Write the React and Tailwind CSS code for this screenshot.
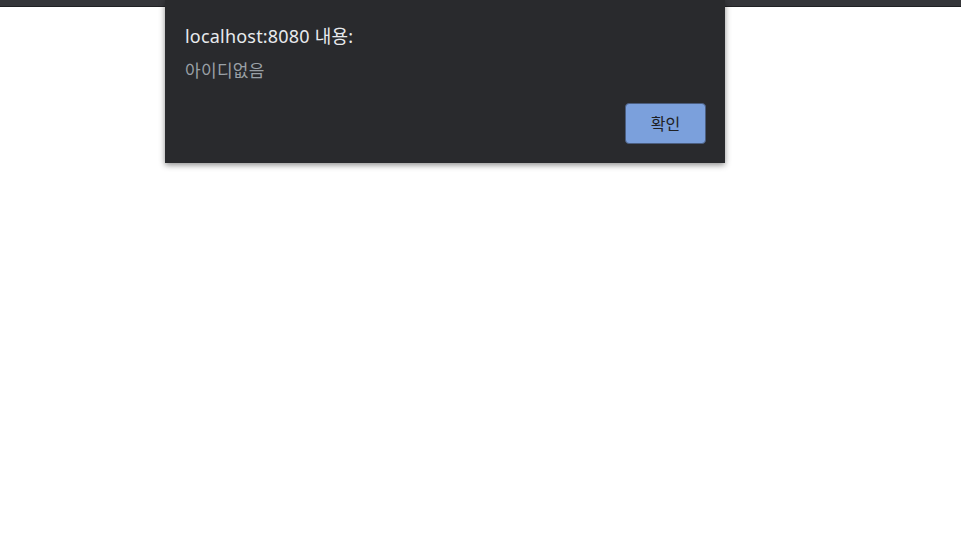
export default function App() {
  return (
    <div className="relative h-[535px] w-[961px] overflow-hidden bg-white font-['Noto_Sans','Noto_Sans_CJK_KR',sans-serif]">
      <div className="h-[7px] w-full border-b border-[#202124] bg-[#35363a]" />
      <div className="absolute left-[165px] top-0 h-[163px] w-[560px] bg-[#292a2d] shadow-[0_2px_6px_rgba(0,0,0,0.45)]">
        <div className="px-5 pt-[23px]">
          <div className="text-[18px] leading-[26px] tracking-[0.2px] text-[#e8eaed]">localhost:8080 내용:</div>
          <div className="mt-[10px] text-[17px] leading-[24px] tracking-[0.3px] text-[#9aa0a6]">아이디없음</div>
        </div>
        <div className="absolute right-[19px] top-[103px]">
          <button className="flex h-[41px] w-[81px] items-center justify-center rounded-[4px] border border-[#4b5e80] bg-[#7ba0dc] text-[16px] text-[#202124]">
            확인
          </button>
        </div>
      </div>
    </div>
  );
}
